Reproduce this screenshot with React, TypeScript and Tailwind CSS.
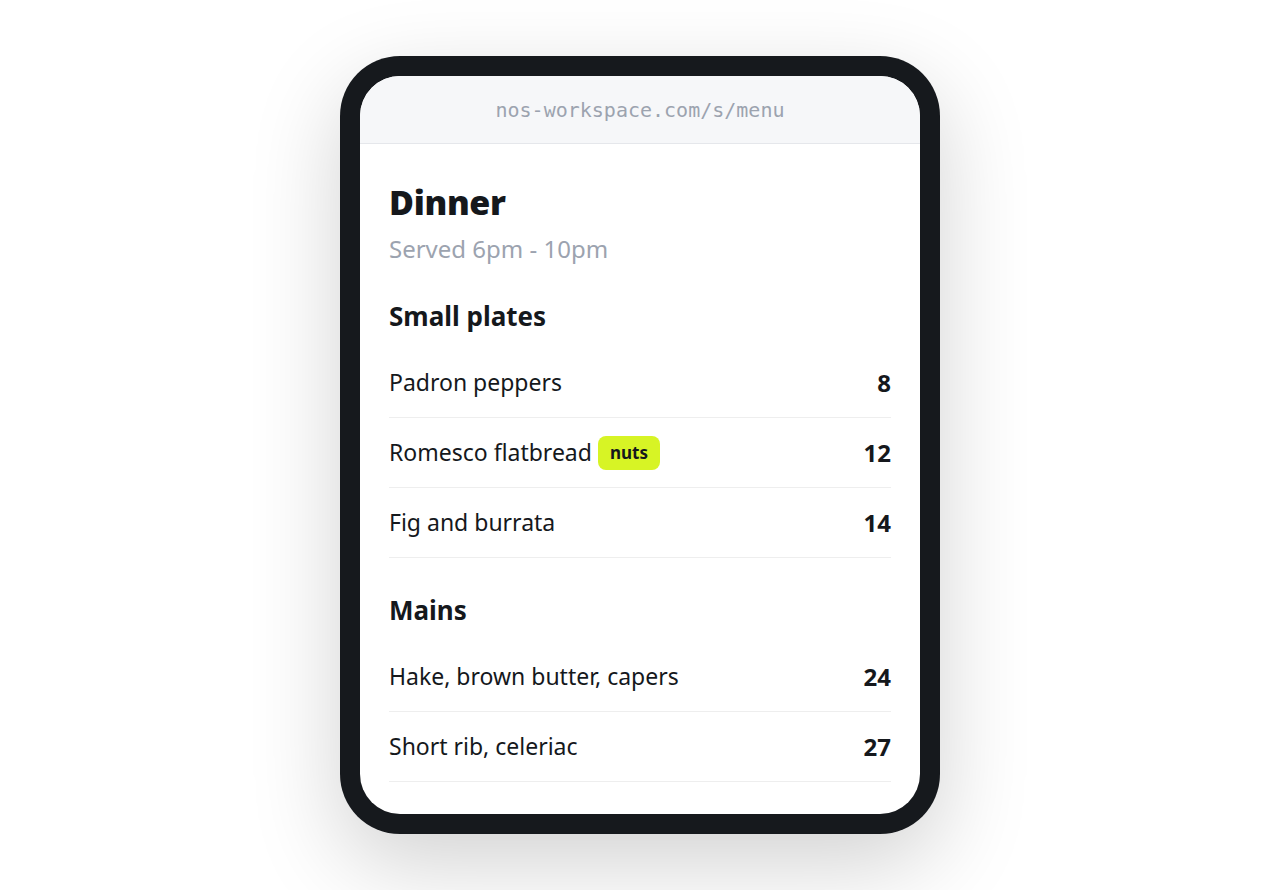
import React from "react";

type Item = { name: string; price: string; tag?: string };

const sections: { title: string; items: Item[] }[] = [
  {
    title: "Small plates",
    items: [
      { name: "Padron peppers", price: "8" },
      { name: "Romesco flatbread", price: "12", tag: "nuts" },
      { name: "Fig and burrata", price: "14" },
    ],
  },
  {
    title: "Mains",
    items: [
      { name: "Hake, brown butter, capers", price: "24" },
      { name: "Short rib, celeriac", price: "27" },
    ],
  },
];

export default function App() {
  return (
    <div
      className="w-full h-[890px] bg-white flex items-center justify-center"
      style={{ fontFamily: '"Noto Sans", "Open Sans", sans-serif' }}
    >
      <div className="w-[600px] h-[778px] bg-[#16191d] rounded-[60px] p-[20px] shadow-[0_30px_90px_rgba(0,0,0,0.18)]">
        <div className="w-full h-full bg-white rounded-[40px] overflow-hidden flex flex-col">
          <div className="h-[68px] shrink-0 bg-[#f6f7f9] border-b border-[#e5e7eb] flex items-center justify-center">
            <span
              className="text-[20px] text-[#9ca3af]"
              style={{ fontFamily: '"DejaVu Sans Mono", "Liberation Mono", monospace' }}
            >
              nos-workspace.com/s/menu
            </span>
          </div>
          <div className="px-[29px] pt-[38px]">
            <h1 className="text-[34px] leading-[40px] font-black text-[#15181c] tracking-[-0.3px]">
              Dinner
            </h1>
            <p className="mt-[12px] text-[24px] leading-[30px] text-[#9ca3af]">
              Served 6pm - 10pm
            </p>
            {sections.map((s) => (
              <div key={s.title} className="mt-[36px]">
                <h2 className="text-[26px] leading-[32px] font-bold text-[#15181c]">
                  {s.title}
                </h2>
                <div className="mt-[16px]">
                  {s.items.map((it) => (
                    <div
                      key={it.name}
                      className="h-[70px] border-b border-[#eeeeee] flex items-center justify-between"
                    >
                      <div className="flex items-center gap-[6px]">
                        <span className="text-[23px] text-[#15181c]">{it.name}</span>
                        {it.tag && (
                          <span className="bg-[#d7f425] text-[#15181c] text-[17px] font-bold rounded-[8px] px-[12px] h-[34px] flex items-center">
                            {it.tag}
                          </span>
                        )}
                      </div>
                      <span className="text-[24px] font-bold text-[#15181c]">{it.price}</span>
                    </div>
                  ))}
                </div>
              </div>
            ))}
          </div>
        </div>
      </div>
    </div>
  );
}
